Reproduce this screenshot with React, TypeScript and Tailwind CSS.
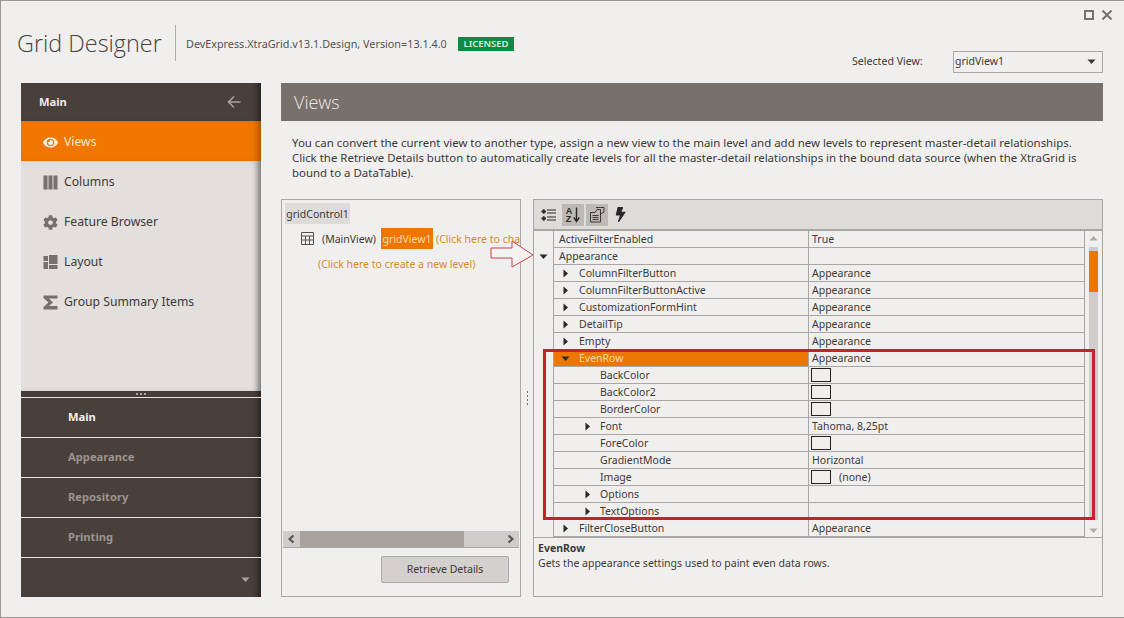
import { FaCog, FaEye, FaBolt } from "react-icons/fa";

const uiFont = "font-['Noto_Sans',sans-serif]";

type Row = {
  name: string;
  value?: string;
  level: number;
  arrow?: "right" | "down";
  swatch?: boolean;
  selected?: boolean;
};

const rows: Row[] = [
  { name: "ActiveFilterEnabled", value: "True", level: 0 },
  { name: "Appearance", level: 0, arrow: "down" },
  { name: "ColumnFilterButton", value: "Appearance", level: 1, arrow: "right" },
  { name: "ColumnFilterButtonActive", value: "Appearance", level: 1, arrow: "right" },
  { name: "CustomizationFormHint", value: "Appearance", level: 1, arrow: "right" },
  { name: "DetailTip", value: "Appearance", level: 1, arrow: "right" },
  { name: "Empty", value: "Appearance", level: 1, arrow: "right" },
  { name: "EvenRow", value: "Appearance", level: 1, arrow: "down", selected: true },
  { name: "BackColor", level: 2, swatch: true },
  { name: "BackColor2", level: 2, swatch: true },
  { name: "BorderColor", level: 2, swatch: true },
  { name: "Font", value: "Tahoma, 8,25pt", level: 2, arrow: "right" },
  { name: "ForeColor", level: 2, swatch: true },
  { name: "GradientMode", value: "Horizontal", level: 2 },
  { name: "Image", value: "(none)", level: 2, swatch: true },
  { name: "Options", level: 2, arrow: "right" },
  { name: "TextOptions", level: 2, arrow: "right" },
  { name: "FilterCloseButton", value: "Appearance", level: 1, arrow: "right" },
];

function Caret({ dir, className }: { dir: "right" | "down"; className?: string }) {
  return (
    <svg width="9" height="9" viewBox="0 0 9 9" className={className} fill="currentColor">
      {dir === "right" ? <path d="M2.5 0.5 L7 4.5 L2.5 8.5 Z" /> : <path d="M0.5 2.5 H8.5 L4.5 7 Z" />}
    </svg>
  );
}

function ColumnsIcon() {
  return (
    <svg width="15" height="15" viewBox="0 0 15 15" fill="#77716d">
      <rect x="0.5" y="0.5" width="4" height="14" />
      <rect x="5.5" y="0.5" width="4" height="14" />
      <rect x="10.5" y="0.5" width="4" height="14" />
    </svg>
  );
}

function LayoutIcon() {
  return (
    <svg width="15" height="15" viewBox="0 0 15 15" fill="#77716d">
      <rect x="0.5" y="1" width="4.5" height="5" />
      <rect x="0.5" y="7" width="4.5" height="7" />
      <rect x="6" y="0" width="8.5" height="9" />
      <rect x="6" y="10" width="8.5" height="4" />
    </svg>
  );
}

function SigmaIcon() {
  return (
    <svg width="15" height="15" viewBox="0 0 15 15" fill="#77716d">
      <path d="M0.5 0.5 H14.5 V3.5 H6 L10 7.5 L6 11 H14.5 V14.5 H0.5 V12 L5.5 7.5 L0.5 3 Z" />
    </svg>
  );
}

function NavItem({ label, icon, active }: { label: string; icon: React.ReactNode; active?: boolean }) {
  return (
    <div
      className={`h-[40px] flex items-center pl-[21px] pt-[2px] gap-[6px] text-[12.2px] ${
        active ? "bg-[#f07600] text-[#fbe6cd] shadow-[inset_-7px_0_6px_-4px_rgba(90,50,0,0.5)]" : "text-[#3f3a37]"
      }`}
    >
      <span className="w-[16px] flex justify-center">{icon}</span>
      <span>{label}</span>
    </div>
  );
}

function GroupItem({ label, active }: { label: string; active?: boolean }) {
  return (
    <div
      className={`h-[40px] bg-[#4a403b] flex items-center pl-[47px] border-b border-[#e8e5e2] font-bold text-[11.2px] shadow-[inset_-7px_0_6px_-4px_rgba(0,0,0,0.5)] ${
        active ? "text-[#f2f0ee]" : "text-[#9b9490]"
      }`}
    >
      {label}
    </div>
  );
}

function Sidebar() {
  return (
    <aside className="w-[240px] h-[514px] flex flex-col shrink-0">
      <div className="h-[38px] bg-[#4a403b] flex items-center justify-between pl-[18px] pr-[20px] font-bold text-[11.2px] text-[#ece9e6] shadow-[inset_-7px_0_6px_-4px_rgba(0,0,0,0.5)]">
        <span>Main</span>
        <svg width="14" height="14" viewBox="0 0 14 14" fill="none" stroke="#a8a29d" strokeWidth="1.6">
          <path d="M13.5 7 H1.5 M7 1.5 L1.5 7 L7 12.5" />
        </svg>
      </div>
      <NavItem label="Views" active icon={<FaEye className="text-[15px] text-[#fdf3e6]" />} />
      <div className="flex-1 bg-[#e2dfdc] shadow-[inset_-7px_0_6px_-4px_rgba(0,0,0,0.5)]">
        <NavItem label="Columns" icon={<ColumnsIcon />} />
        <NavItem label="Feature Browser" icon={<FaCog className="text-[15px] text-[#77716d]" />} />
        <NavItem label="Layout" icon={<LayoutIcon />} />
        <NavItem label="Group Summary Items" icon={<SigmaIcon />} />
      </div>
      <div className="h-[6px] box-content bg-[#4a403b] border-b border-[#e8e5e2] flex justify-center items-center gap-[2px] shadow-[inset_-7px_0_6px_-4px_rgba(0,0,0,0.5)]">
        <span className="w-[2px] h-[2px] bg-[#a8a29d]" />
        <span className="w-[2px] h-[2px] bg-[#a8a29d]" />
        <span className="w-[2px] h-[2px] bg-[#a8a29d]" />
      </div>
      <GroupItem label="Main" active />
      <GroupItem label="Appearance" />
      <GroupItem label="Repository" />
      <GroupItem label="Printing" />
      <div className="h-[39px] bg-[#4a403b] flex items-end justify-end pr-[11px] pb-[13px] text-[#a8a29d] shadow-[inset_-7px_0_6px_-4px_rgba(0,0,0,0.5)]">
        <Caret dir="down" />
      </div>
    </aside>
  );
}

function TreePanel() {
  return (
    <div className="w-[240px] h-[398px] border border-[#a9a7a4] flex flex-col shrink-0">
      <div className="flex-1 overflow-hidden pt-[3px] pl-[3px] text-[10.5px] leading-[16px] text-[#3c3a38]">
        <div className="w-[65px] h-[21px] bg-[#dedcd9] flex items-center justify-center">gridControl1</div>
        <div className="flex items-center h-[21px] mt-[4px] pl-[16px] whitespace-nowrap">
          <svg className="shrink-0" width="13" height="13" viewBox="0 0 13 13" fill="none" stroke="#55514e">
            <path d="M0.5 0.5 H12.5 V12.5 H0.5 Z M0.5 4 H12.5 M0.5 8 H12.5 M4.5 4 V12.5 M8.5 4 V12.5" />
          </svg>
          <span className="ml-[8px] w-[59px] shrink-0">(MainView)</span>
          <span className="h-[21px] w-[52px] shrink-0 bg-[#ec7600] text-[#fbdcb0] flex items-center justify-center">gridView1</span>
          <span className="ml-[3px] shrink-0 text-[#d98a1e]">(Click here to change view)</span>
        </div>
        <div className="mt-[7px] pl-[33px] text-[#d98a1e] whitespace-nowrap">(Click here to create a new level)</div>
      </div>
      <div className="h-[16px] box-content mx-[1px] bg-[#cfccc9] border-b border-[#a9a7a4] flex items-center">
        <svg className="shrink-0" width="17" height="16" viewBox="0 0 17 16" fill="none" stroke="#55514e" strokeWidth="2">
          <path d="M10.5 4.5 L6.5 8 L10.5 11.5" />
        </svg>
        <div className="w-[164px] h-[16px] bg-[#a8a29d]" />
        <div className="flex-1" />
        <svg className="shrink-0" width="17" height="16" viewBox="0 0 17 16" fill="none" stroke="#55514e" strokeWidth="2">
          <path d="M6.5 4.5 L10.5 8 L6.5 11.5" />
        </svg>
      </div>
      <div className="h-[48px] flex justify-end items-start pt-[8px] pr-[11px]">
        <button className="w-[128px] h-[27px] bg-[#d3d0cd] border border-[#aeaaa6] rounded-[2px] text-[10.5px] text-[#3c3a38]">
          Retrieve Details
        </button>
      </div>
    </div>
  );
}

function GridRow({ row }: { row: Row }) {
  const textLeft = [5, 25, 46][row.level];
  const arrowLeft = [-15, 7, 29][row.level];
  return (
    <div className="flex h-[17px] border-b border-[#a9a7a4]">
      <div
        className={`relative w-[255px] border-l border-[#a9a7a4] flex items-center ${
          row.selected ? "bg-[#ec7600] text-[#fbdcb0]" : ""
        }`}
      >
        <span className="whitespace-nowrap" style={{ marginLeft: textLeft }}>
          {row.name}
        </span>
        {row.arrow && (
          <span className="absolute top-[4px] text-[#2a2826]" style={{ left: arrowLeft }}>
            <Caret dir={row.arrow} />
          </span>
        )}
      </div>
      <div className="w-[277px] border-l border-r border-[#a9a7a4] flex items-center pl-[3px] whitespace-nowrap">
        {row.swatch && <span className="w-[20px] h-[14px] -ml-[1px] border border-[#222] mr-[8px]" />}
        {row.value}
      </div>
    </div>
  );
}

function PropertyPanel() {
  return (
    <div className="w-[570px] h-[398px] border border-[#a9a7a4] flex flex-col shrink-0">
      <div className="h-[31px] shrink-0 bg-[#dedcd9] border-b-2 border-[#a9a7a4] flex items-center pl-[7px] text-[#2a2826]">
        <svg width="16" height="16" viewBox="0 0 16 16" fill="none" stroke="#2a2826" strokeWidth="1.2">
          <path d="M6 3 H15 M6 6 H15 M6 10 H15 M6 13 H15" />
          <path d="M0.5 4.5 H5 M2.75 2.2 V6.8 M0.5 11.5 H5 M2.75 9.2 V13.8" strokeWidth="1.8" />
        </svg>
        <div className="ml-[5px] w-[22px] h-[22px] bg-[#bdb9b5] flex items-center justify-center gap-[1px]">
          <span className="flex flex-col font-['Liberation_Sans',sans-serif] font-bold text-[9px] leading-[8px]">
            <span>A</span>
            <span>Z</span>
          </span>
          <svg width="7" height="16" viewBox="0 0 7 16" fill="none" stroke="#2a2826" strokeWidth="1.4">
            <path d="M3.5 0.5 V14 M0.8 10.5 L3.5 14.5 L6.2 10.5" />
          </svg>
        </div>
        <div className="ml-[2px] w-[22px] h-[22px] bg-[#bdb9b5] flex items-center justify-center">
          <svg width="16" height="17" viewBox="0 0 16 17" fill="none" stroke="#3a3735">
            <path d="M1.5 6.5 H6 L8 3.5 H11.5 V16 H1.5 Z" />
            <path d="M3.5 9.5 H9.5 M3.5 11.5 H9.5 M3.5 13.5 H9.5" />
            <path d="M7 1.5 H15 V6 L11.5 8" />
          </svg>
        </div>
        <FaBolt className="ml-[5px] text-[15px] text-[#2a2826] -skew-x-6" />
      </div>
      <div className="flex h-[307px] shrink-0 overflow-hidden border-b border-[#a9a7a4]">
        <div className="w-[19px] shrink-0" />
        <div className="w-[532px] shrink-0 text-[10.5px] leading-[16px] text-[#3c3a38]">
          {rows.map((r) => (
            <GridRow key={r.name} row={r} />
          ))}
        </div>
        <div className="flex-1 flex flex-col items-center pt-[3px] text-[#aeaaa6]">
          <Caret dir="down" className="rotate-180 shrink-0" />
          <div className="mt-[4px] w-[9px] h-[273px] shrink-0 bg-[#cfccc9] pt-[4px]">
            <div className="h-[41px] bg-[#ec7600]" />
          </div>
          <Caret dir="down" className="mt-[6px] shrink-0" />
        </div>
      </div>
      <div className="flex-1 pl-[4px] pt-[3px] text-[10.5px] leading-[15px] text-[#3c3a38]">
        <div className="font-bold">EvenRow</div>
        <div>Gets the appearance settings used to paint even data rows.</div>
      </div>
    </div>
  );
}

export default function App() {
  return (
    <div className={`relative w-[1124px] h-[618px] overflow-hidden bg-[#f0efed] border-t border-l border-b border-[#9a9896] text-[#3c3a38] ${uiFont}`}>
      <header className="h-[82px] relative flex items-center pl-[16px] pr-[21px]">
        <h1 className="font-['Open_Sans',sans-serif] font-light text-[23.4px] text-[#45413f] w-[144px] mt-[4px] whitespace-nowrap">Grid Designer</h1>
        <div className="w-px h-[36px] bg-[#aeaaa6] ml-[14px] mt-[2px]" />
        <span className="ml-[10px] w-[262px] text-[10.8px] text-[#55514e] whitespace-nowrap mt-[4px]">DevExpress.XtraGrid.v13.1.Design, Version=13.1.4.0</span>
        <span className="ml-[10px] w-[56px] h-[14px] mt-[4px] bg-[#0a8a42] text-[#d8f0df] text-[9.5px] font-semibold flex items-center justify-center">LICENSED</span>
        <div className="ml-auto flex items-center mt-[39px]">
          <span className="text-[10.6px] w-[101px]">Selected View:</span>
          <div className="w-[150px] h-[22px] border border-[#a9a7a4] pl-[1px] pr-[6px] flex items-center justify-between text-[10.5px]">
            gridView1
            <Caret dir="down" className="text-[#3c3a38]" />
          </div>
        </div>
        <div className="absolute top-[9px] right-[12px] flex items-center gap-[8px]">
          <span className="w-[10px] h-[10px] border-2 border-[#77716d]" />
          <svg width="10" height="10" viewBox="0 0 10 10" stroke="#77716d" strokeWidth="2">
            <path d="M0.5 0.5 L9.5 9.5 M9.5 0.5 L0.5 9.5" />
          </svg>
        </div>
      </header>
      <div className="flex gap-[20px] pl-[20px]">
        <Sidebar />
        <main className="w-[822px]">
          <div className="h-[38px] bg-[#78706b] flex items-center pl-[13px] font-['Open_Sans',sans-serif] font-light text-[18px] text-[#ece9e6]">Views</div>
          <p className="h-[78px] pt-[14px] pl-[11px] pr-[10px] text-[11.45px] leading-[15px] text-[#3c3a38]">
            You can convert the current view to another type, assign a new view to the main level and add new levels to represent master-detail relationships.
            <br />
            Click the Retrieve Details button to automatically create levels for all the master-detail relationships in the bound data source (when the XtraGrid is
            <br />
            bound to a DataTable).
          </p>
          <div className="flex">
            <TreePanel />
            <div className="w-[12px] flex flex-col items-center justify-center gap-[2px]">
              <span className="w-[1px] h-[2px] bg-[#77716d]" />
              <span className="w-[1px] h-[2px] bg-[#77716d]" />
              <span className="w-[1px] h-[2px] bg-[#77716d]" />
              <span className="w-[1px] h-[2px] bg-[#77716d]" />
            </div>
            <PropertyPanel />
          </div>
        </main>
      </div>
      {/* annotations drawn over the screenshot */}
      <div className="absolute left-[542px] top-[348px] w-[552px] h-[171px] border-[3px] border-[#cc1f2b]" />
      <svg className="absolute left-[488px] top-[239px]" width="46" height="30" viewBox="0 0 46 30" fill="#f5f3f1" stroke="#d0404a" strokeWidth="1">
        <path d="M2 8 H23 V1 L44 15 L23 27 V18 H2 Z" />
      </svg>
    </div>
  );
}
